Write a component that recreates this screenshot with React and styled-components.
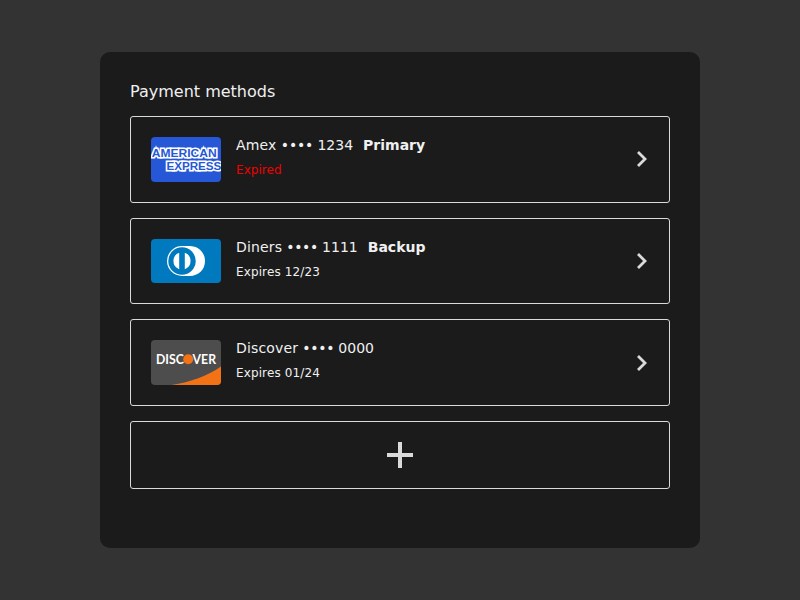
import React from "react";
import styled, { createGlobalStyle } from "styled-components";

const GlobalStyle = createGlobalStyle`
  * { box-sizing: border-box; }
  body {
    margin: 0;
    background: #333;
    color: #f0f0f0;
    font-family: "DejaVu Sans", sans-serif;
  }
`;

const Page = styled.main`
  display: flex;
  align-items: center;
  justify-content: center;
  height: 100vh;
`;

const Panel = styled.section`
  width: 600px;
  height: 496px;
  padding: 30px;
  border-radius: 10px;
  background: #1b1b1b;
`;

const Title = styled.h1`
  margin: 0 0 15px;
  font-size: 16px;
  font-weight: 400;
  line-height: 19px;
`;

const List = styled.div`
  display: flex;
  flex-direction: column;
  gap: 15px;
`;

const Row = styled.button`
  display: flex;
  align-items: center;
  justify-content: ${(p) => (p.$centered ? "center" : "flex-start")};
  width: 100%;
  height: ${(p) => (p.$centered ? "68px" : "86.6px")};
  padding: 0 20px;
  border: 1px solid #dadada;
  border-radius: 3px;
  background: none;
  color: inherit;
  font: inherit;
  text-align: left;
`;

const Logo = styled.svg`
  display: block;
  flex: none;
  width: 70px;
  height: ${(p) => p.$height || 45}px;
  border-radius: 4px;
`;

const Details = styled.div`
  flex: 1;
  align-self: flex-start;
  padding: 20px 0 0 15px;
`;

const Name = styled.div`
  display: flex;
  gap: 10px;
  font-size: 14px;
  line-height: 16px;
`;

const BrandName = styled.span`
  letter-spacing: 0.16px;
`;

const Dots = styled.span`
  letter-spacing: ${(p) => p.$tracking}px;
`;

const Tag = styled.strong`
  font-weight: 700;
`;

const Expiry = styled.div`
  margin-top: 10px;
  font-size: 12px;
  line-height: 14px;
  letter-spacing: ${(p) => (p.$expired ? "0.06px" : "0.12px")};
  color: ${(p) => (p.$expired ? "#f00000" : "inherit")};
`;

const Glyph = styled.svg`
  display: block;
  flex: none;
`;

const Arrow = styled(Glyph)`
  margin: 0.2px -1px 0 0;
`;

const LogoText = styled.text`
  font-family: ${(p) => p.$font || '"Liberation Sans"'}, sans-serif;
  font-weight: 700;
  font-size: ${(p) => p.$size}px;
  paint-order: stroke;
  stroke-linejoin: miter;
`;

const Amex = () => (
  <Logo viewBox="0 0 70 45" aria-label="American Express">
    <rect width="70" height="45" fill="#2557d6" />
    <LogoText $size={11.4} x="0.8" y="19.8" textLength="64.8" lengthAdjust="spacingAndGlyphs" fill="#2557d6" stroke="#fff" strokeWidth="3.1">AMERICAN</LogoText>
    <LogoText $size={11.4} x="15.4" y="33.2" textLength="55" lengthAdjust="spacingAndGlyphs" fill="#2557d6" stroke="#fff" strokeWidth="3.1">EXPRESS</LogoText>
  </Logo>
);

const Diners = () => (
  <Logo $height={44} viewBox="0 0 70 44" aria-label="Diners Club">
    <rect width="70" height="44" fill="#0079be" />
    <path d="M31 7h7.500C47.500 7 54 13.600 54 22s-6.500 15-15.500 15H31a15 15 0 0 1 0-30z" fill="#fff" />
    <circle cx="31" cy="22" r="13.7" fill="#0079be" />
    <path d="M28.200 13.850v16.300a8.650 8.650 0 0 1 0-16.300zM33.800 13.850a8.650 8.650 0 0 1 0 16.300z" fill="#fff" />
  </Logo>
);

const Discover = () => (
  <Logo viewBox="0 0 70 45" aria-label="Discover">
    <rect width="70" height="45" fill="#4d4d4d" />
    <path d="M70 26.500C56 36 40 42 20.500 45H70z" fill="#f47216" />
    <LogoText $font="Lato" $size={12.5} x="5" y="23.8" textLength="27.8" lengthAdjust="spacingAndGlyphs" fill="#fff">DISC</LogoText>
    <circle cx="37.200" cy="19.300" r="5" fill="#f47216" />
    <LogoText $font="Lato" $size={12.5} x="41.6" y="23.8" textLength="23.4" lengthAdjust="spacingAndGlyphs" fill="#fff">VER</LogoText>
  </Logo>
);

const Chevron = () => (
  <Arrow width="14" height="18" viewBox="0 0 14 18">
    <path d="M2 2 9 9l-7 7" fill="none" stroke="#dadada" strokeWidth="2.8" />
  </Arrow>
);

const methods = [
  { brand: "Amex", digits: "1234", tag: "Primary", expiry: "Expired", expired: true, tracking: -0.17, Brand: Amex },
  { brand: "Diners", digits: "1111", tag: "Backup", expiry: "Expires 12/23", tracking: -0.34, Brand: Diners },
  { brand: "Discover", digits: "0000", expiry: "Expires 01/24", tracking: -0.3, Brand: Discover },
];

export default function App() {
  return (
    <>
      <GlobalStyle />
      <Page>
        <Panel>
          <Title>Payment methods</Title>
          <List>
            {methods.map(({ brand, digits, tag, expiry, expired, tracking, Brand }) => (
              <Row key={brand}>
                <Brand />
                <Details>
                  <Name>
                    <span>
                      <BrandName>{brand}</BrandName>
                      <Dots $tracking={tracking}>{" •••• "}</Dots>
                      {digits}
                    </span>
                    {tag && <Tag>{tag}</Tag>}
                  </Name>
                  <Expiry $expired={expired}>{expiry}</Expiry>
                </Details>
                <Chevron />
              </Row>
            ))}
            <Row $centered aria-label="Add payment method">
              <Glyph width="26" height="26" viewBox="0 0 26 26">
                <path d="M11 0h4v11h11v4H15v11h-4V15H0v-4h11z" fill="#dadada" />
              </Glyph>
            </Row>
          </List>
        </Panel>
      </Page>
    </>
  );
}
